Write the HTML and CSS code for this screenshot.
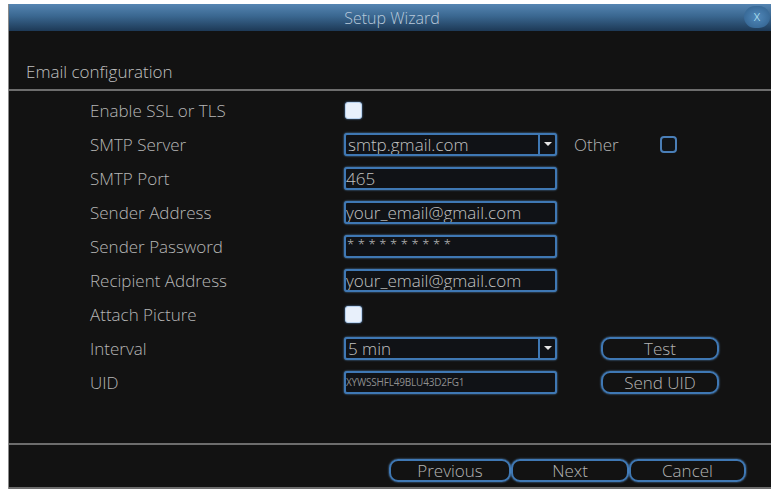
FILE: index.html
```html
<!DOCTYPE html>
<html>
<head>
<meta charset="utf-8">
<link rel="stylesheet" href="styles.css">
</head>
<body>
<div class="dialog">
  <div class="titlebar">
    <span class="title">Setup Wizard</span>
    <span class="close">x</span>
  </div>
  <div class="section-title">Email configuration</div>
  <div class="sep"></div>
  <div class="form">
    <div class="row">
      <div class="label">Enable SSL or TLS</div>
      <div class="ctl"><span class="check on"></span></div>
    </div>
    <div class="row">
      <div class="label">SMTP Server</div>
      <div class="ctl"><div class="field select"><span class="val">smtp.gmail.com</span><span class="arrow"></span></div></div>
      <div class="extra"><span class="other">Other</span><span class="check off"></span></div>
    </div>
    <div class="row">
      <div class="label">SMTP Port</div>
      <div class="ctl"><div class="field"><span class="val tight">465</span></div></div>
    </div>
    <div class="row">
      <div class="label">Sender Address</div>
      <div class="ctl"><div class="field"><span class="val tight">your_email@gmail.com</span></div></div>
    </div>
    <div class="row">
      <div class="label">Sender Password</div>
      <div class="ctl"><div class="field"><span class="val pw">**********</span></div></div>
    </div>
    <div class="row">
      <div class="label">Recipient Address</div>
      <div class="ctl"><div class="field"><span class="val tight">your_email@gmail.com</span></div></div>
    </div>
    <div class="row">
      <div class="label">Attach Picture</div>
      <div class="ctl"><span class="check on"></span></div>
    </div>
    <div class="row">
      <div class="label">Interval</div>
      <div class="ctl"><div class="field select"><span class="val">5 min</span><span class="arrow"></span></div></div>
      <div class="extra"><span class="btn side">Test</span></div>
    </div>
    <div class="row">
      <div class="label">UID</div>
      <div class="ctl"><div class="field"><span class="val uid">XYWSSHFL49BLU43D2FG1</span></div></div>
      <div class="extra"><span class="btn side">Send UID</span></div>
    </div>
  </div>
  <div class="sep"></div>
  <div class="footer">
    <span class="btn foot w1">Previous</span>
    <span class="btn foot w2">Next</span>
    <span class="btn foot w3">Cancel</span>
  </div>
</div>
</body>
</html>
```

FILE: styles.css
```css
html, body {
  margin: 0;
  padding: 0;
  background: #ffffff;
}
body {
  font-family: "Open Sans", "Liberation Sans", sans-serif;
  font-weight: 300;
}
.dialog {
  margin: 4px 0 0 8px;
  width: 763px;
  height: 485px;
  background: #121212;
  border-left: 1px solid #8a8a8a;
  box-sizing: border-box;
  display: flex;
  flex-direction: column;
}
.titlebar {
  height: 27px;
  flex: none;
  background: linear-gradient(#5585b2, #3a6790 45%, #1d3956);
  display: flex;
  align-items: center;
  justify-content: center;
  position: relative;
}
.title {
  color: #b9c9da;
  font-size: 16px;
  margin-left: 4px;
}
.close {
  position: absolute;
  right: 1px;
  top: 2px;
  width: 26px;
  height: 22px;
  border-radius: 11px;
  background: radial-gradient(#5088ba, #2f5e8a);
  color: #b6e6f4;
  font-size: 14px;
  line-height: 19px;
  text-align: center;
}
.section-title {
  height: 58px;
  flex: none;
  display: flex;
  align-items: flex-end;
  padding: 0 0 6px 17px;
  box-sizing: border-box;
  color: #c0c0c0;
  font-size: 17px;
}
.sep {
  height: 2px;
  flex: none;
  background: #6d6d6d;
}
.form {
  flex: 1;
  padding: 2px 0 0 81px;
}
.row {
  height: 34px;
  display: grid;
  grid-template-columns: 254px 213px auto;
  align-items: center;
}
.label {
  color: #b6b6b6;
  font-size: 17px;
}
.ctl {
  display: flex;
  align-items: center;
}
.check {
  display: inline-block;
  width: 17px;
  height: 17px;
  box-sizing: border-box;
  border-radius: 3px;
}
.check.on {
  margin-left: 1px;
  background: #e8f0fb;
  border: 1px solid #b9d2ee;
  box-shadow: 0 0 2px #6a9ad0;
}
.check.off {
  border: 2px solid #4a7fb8;
  background: #101418;
  border-radius: 4px;
}
.field {
  width: 213px;
  height: 23px;
  box-sizing: border-box;
  border: 2px solid #3f78b4;
  border-radius: 3px;
  box-shadow: 0 0 2px #5c95cf;
  display: flex;
  align-items: center;
  background: #101216;
  overflow: hidden;
}
.val {
  flex: 1;
  color: #c2c2c2;
  font-size: 17px;
  padding-left: 2px;
  white-space: nowrap;
}
.val.tight {
  padding-left: 0;
}
.val.pw {
  font-size: 13px;
  letter-spacing: 3.6px;
  align-self: flex-start;
  line-height: 14px;
  padding-left: 1px;
}
.val.uid {
  font-size: 10px;
  letter-spacing: -0.2px;
  color: #8e8e8e;
  padding-left: 0;
  font-weight: 400;
}
.select .arrow {
  flex: none;
  width: 15px;
  height: 100%;
  border-left: 2px solid #3f78b4;
  position: relative;
}
.select .arrow::after {
  content: "";
  position: absolute;
  left: 4px;
  top: 7px;
  border-left: 4px solid transparent;
  border-right: 4px solid transparent;
  border-top: 4px solid #e6e6e6;
}
.extra {
  display: flex;
  align-items: center;
}
.other {
  display: inline-block;
  width: 86px;
  margin-left: 17px;
  color: #b6b6b6;
  font-size: 17px;
}
.btn {
  display: inline-flex;
  align-items: center;
  justify-content: center;
  height: 23px;
  box-sizing: border-box;
  border: 2px solid #3f78b4;
  box-shadow: 0 0 2px #5c95cf;
  border-radius: 9px;
  color: #b4b4b4;
  font-size: 17px;
}
.btn.side {
  margin-left: 44px;
  width: 118px;
}
.footer {
  height: 44px;
  flex: none;
  display: flex;
  justify-content: flex-end;
  align-items: flex-start;
  padding: 14px 25px 0 0;
  box-sizing: border-box;
  border-bottom: 2px solid #6d6d6d;
}
.btn.foot {
  margin-left: 0;
}
.w1 { width: 122px; }
.w2 { width: 118px; }
.w3 { width: 117px; }
```
